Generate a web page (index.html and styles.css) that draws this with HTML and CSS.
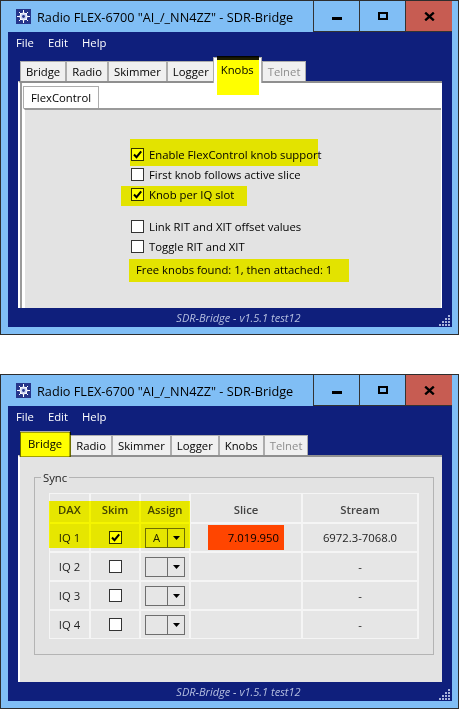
FILE: index.html
```html
<!DOCTYPE html>
<html>
<head>
<meta charset="utf-8">
<title>SDR-Bridge</title>
<link rel="stylesheet" href="styles.css">
</head>
<body>
<div class="window win-knobs">
  <div class="titlebar">
    <svg class="appicon" width="15" height="15" viewBox="0 0 15 15"><rect width="15" height="15" fill="#26358a"/><g stroke="#fff" stroke-width="1"><line x1="7.5" y1="1" x2="7.5" y2="14"/><line x1="1" y1="7.5" x2="14" y2="7.5"/><line x1="3" y1="3" x2="12" y2="12"/><line x1="12" y1="3" x2="3" y2="12"/></g><circle cx="7.5" cy="7.5" r="3.6" fill="#c9d2f2" stroke="#fff"/><circle cx="7.5" cy="7.5" r="1.4" fill="#26358a"/></svg>
    <span class="title">Radio FLEX-6700 "AI_/_NN4ZZ" - SDR-Bridge</span>
    <div class="caption-btns">
      <div class="cbtn"><svg class="ic-min" width="10" height="3"><rect width="10" height="3" fill="#000"/></svg></div>
      <div class="cbtn"><svg width="10" height="8"><rect x="1" y="1" width="8" height="6" fill="none" stroke="#000" stroke-width="2"/></svg></div>
      <div class="cbtn close"><svg width="11" height="9" viewBox="0 0 11 9"><path d="M1.2 0.6 L9.8 8.4 M9.8 0.6 L1.2 8.4" stroke="#000" stroke-width="2.3"/></svg></div>
    </div>
  </div>
  <div class="client">
    <div class="menubar"><span>File</span><span>Edit</span><span>Help</span></div>
    <div class="tabstrip">
      <div class="tab">Bridge</div>
      <div class="tab">Radio</div>
      <div class="tab">Skimmer</div>
      <div class="tab">Logger</div>
      <div class="tab sel">Knobs</div>
      <div class="tab disabled">Telnet</div>
    </div>
    <div class="tabpage knobs-page">
      <div class="subtabstrip"><div class="subtab">FlexControl</div></div>
      <div class="subpage">
        <div class="checklist">
          <div class="cb-row"><span class="cb"><svg width="11" height="11" viewBox="0 0 11 11"><path d="M2 5.5 L4.5 8.2 L9.2 2.4" fill="none" stroke="#000" stroke-width="2"/></svg></span>Enable FlexControl knob support</div>
          <div class="cb-row"><span class="cb"></span>First knob follows active slice</div>
          <div class="cb-row"><span class="cb"><svg width="11" height="11" viewBox="0 0 11 11"><path d="M2 5.5 L4.5 8.2 L9.2 2.4" fill="none" stroke="#000" stroke-width="2"/></svg></span>Knob per IQ slot</div>
          <div class="cb-row gap"><span class="cb"></span>Link RIT and XIT offset values</div>
          <div class="cb-row"><span class="cb"></span>Toggle RIT and XIT</div>
          <div class="info">Free knobs found: 1, then attached: 1</div>
        </div>
      </div>
    </div>
    <div class="statusbar">
      <span class="status-text">SDR-Bridge - v1.5.1 test12</span>
      <svg class="grip" width="11" height="11" viewBox="0 0 11 11" fill="#a9b4dc"><rect x="9" y="0" width="2" height="2"/><rect x="6" y="3" width="2" height="2"/><rect x="9" y="3" width="2" height="2"/><rect x="3" y="6" width="2" height="2"/><rect x="6" y="6" width="2" height="2"/><rect x="9" y="6" width="2" height="2"/><rect x="0" y="9" width="2" height="2"/><rect x="3" y="9" width="2" height="2"/><rect x="6" y="9" width="2" height="2"/><rect x="9" y="9" width="2" height="2"/></svg>
    </div>
  </div>
  <span class="mark mark-knobs-tab"></span>
  <span class="mark mark-enable"></span>
  <span class="mark mark-perslot"></span>
  <span class="mark mark-found"></span>
</div>

<div class="window win-bridge">
  <div class="titlebar">
    <svg class="appicon" width="15" height="15" viewBox="0 0 15 15"><rect width="15" height="15" fill="#26358a"/><g stroke="#fff" stroke-width="1"><line x1="7.5" y1="1" x2="7.5" y2="14"/><line x1="1" y1="7.5" x2="14" y2="7.5"/><line x1="3" y1="3" x2="12" y2="12"/><line x1="12" y1="3" x2="3" y2="12"/></g><circle cx="7.5" cy="7.5" r="3.6" fill="#c9d2f2" stroke="#fff"/><circle cx="7.5" cy="7.5" r="1.4" fill="#26358a"/></svg>
    <span class="title">Radio FLEX-6700 "AI_/_NN4ZZ" - SDR-Bridge</span>
    <div class="caption-btns">
      <div class="cbtn"><svg class="ic-min" width="10" height="3"><rect width="10" height="3" fill="#000"/></svg></div>
      <div class="cbtn"><svg width="10" height="8"><rect x="1" y="1" width="8" height="6" fill="none" stroke="#000" stroke-width="2"/></svg></div>
      <div class="cbtn close"><svg width="11" height="9" viewBox="0 0 11 9"><path d="M1.2 0.6 L9.8 8.4 M9.8 0.6 L1.2 8.4" stroke="#000" stroke-width="2.3"/></svg></div>
    </div>
  </div>
  <div class="client">
    <div class="menubar"><span>File</span><span>Edit</span><span>Help</span></div>
    <div class="tabstrip">
      <div class="tab sel first">Bridge</div>
      <div class="tab">Radio</div>
      <div class="tab">Skimmer</div>
      <div class="tab">Logger</div>
      <div class="tab">Knobs</div>
      <div class="tab disabled">Telnet</div>
    </div>
    <div class="tabpage bridge-page">
      <fieldset class="group">
        <legend>Sync</legend>
        <div class="grid">
          <div class="hd">DAX</div><div class="hd">Skim</div><div class="hd">Assign</div><div class="hd">Slice</div><div class="hd">Stream</div>

          <div>IQ 1</div>
          <div><span class="cb"><svg width="11" height="11" viewBox="0 0 11 11"><path d="M2 5.5 L4.5 8.2 L9.2 2.4" fill="none" stroke="#000" stroke-width="2"/></svg></span></div>
          <div><span class="combo"><span class="combo-val">A</span><span class="combo-arrow"><svg width="7" height="4"><polygon points="0,0 7,0 3.5,4" fill="#000"/></svg></span></span></div>
          <div><span class="slice-val">7.019.950</span></div>
          <div>6972.3-7068.0</div>

          <div>IQ 2</div>
          <div><span class="cb"></span></div>
          <div><span class="combo"><span class="combo-val"></span><span class="combo-arrow"><svg width="7" height="4"><polygon points="0,0 7,0 3.5,4" fill="#000"/></svg></span></span></div>
          <div></div>
          <div>-</div>

          <div>IQ 3</div>
          <div><span class="cb"></span></div>
          <div><span class="combo"><span class="combo-val"></span><span class="combo-arrow"><svg width="7" height="4"><polygon points="0,0 7,0 3.5,4" fill="#000"/></svg></span></span></div>
          <div></div>
          <div>-</div>

          <div>IQ 4</div>
          <div><span class="cb"></span></div>
          <div><span class="combo"><span class="combo-val"></span><span class="combo-arrow"><svg width="7" height="4"><polygon points="0,0 7,0 3.5,4" fill="#000"/></svg></span></span></div>
          <div></div>
          <div>-</div>
        </div>
      </fieldset>
    </div>
    <div class="statusbar">
      <span class="status-text">SDR-Bridge - v1.5.1 test12</span>
      <svg class="grip" width="11" height="11" viewBox="0 0 11 11" fill="#a9b4dc"><rect x="9" y="0" width="2" height="2"/><rect x="6" y="3" width="2" height="2"/><rect x="9" y="3" width="2" height="2"/><rect x="3" y="6" width="2" height="2"/><rect x="6" y="6" width="2" height="2"/><rect x="9" y="6" width="2" height="2"/><rect x="0" y="9" width="2" height="2"/><rect x="3" y="9" width="2" height="2"/><rect x="6" y="9" width="2" height="2"/><rect x="9" y="9" width="2" height="2"/></svg>
    </div>
  </div>
  <span class="mark mark-bridge-tab"></span>
  <span class="mark mark-table"></span>
</div>
</body>
</html>
```

FILE: styles.css
```css
* { box-sizing: border-box; }

body {
  margin: 0;
  background: #fff;
  font-family: "Open Sans", "Noto Sans", sans-serif;
  font-size: 11.3px;
  color: #000;
}

.window {
  position: relative;
  width: 459px;
  height: 335px;
  border: 1px solid #2d2d2d;
  background: #80bef5;
  display: flex;
  flex-direction: column;
}
.window + .window { margin-top: 39px; }

.titlebar {
  height: 31px;
  flex: none;
  display: flex;
  align-items: center;
}
.appicon { margin-left: 15px; flex: none; }
.title {
  margin-left: 6px;
  font-size: 12.7px;
  white-space: nowrap;
}
.caption-btns {
  margin-left: auto;
  margin-right: 6px;
  align-self: stretch;
  display: flex;
  border-bottom: 1px solid #333;
}
.cbtn {
  width: 46px;
  border-left: 1px solid #333;
  display: flex;
  align-items: center;
  justify-content: center;
}
.cbtn .ic-min { margin-top: 4px; }
.cbtn.close { width: 47px; background: #c75c52; }

.client {
  flex: 1;
  margin: 0 6px 7px 7px;
  background: #0f1f7c;
  display: flex;
  flex-direction: column;
  min-height: 0;
}

.menubar {
  height: 20px;
  flex: none;
  display: flex;
  align-items: center;
  padding-left: 1px;
  color: #fff;
}
.menubar span { padding: 0 7px; }

.tabstrip {
  margin-top: 5px;
  height: 24px;
  flex: none;
  display: flex;
  align-items: flex-end;
  padding-left: 12px;
}
.tab {
  height: 20px;
  padding: 0 5px;
  border: 1px solid #adadad;
  border-bottom: none;
  background: #f0f0f0;
  display: flex;
  align-items: center;
  white-space: nowrap;
}
.tab.sel {
  height: 26px;
  margin-bottom: -2px;
  margin-left: -2px;
  padding: 0 7px 2px;
  background: #fff;
  position: relative;
  z-index: 1;
}
.tab.sel.first { margin-left: 0; }
.tab.disabled { color: #8d8d8d; }

.tabpage {
  margin: 0 10px;
  height: 227px;
  flex: none;
  border-top: 2px solid #8f8f8f;
  border-left: 2px solid #fff;
}

.knobs-page {
  background: #fff;
  box-shadow: inset 2px 0 #9a9a9a;
  padding: 3px 1px 0 3px;
  display: flex;
  flex-direction: column;
}
.subtabstrip { display: flex; flex: none; }
.subtab {
  height: 22px;
  padding: 0 7px;
  border: 1px solid #adadad;
  border-bottom: none;
  background: #fff;
  display: flex;
  align-items: center;
}
.subpage {
  flex: 1;
  border-top: 2px solid #9a9a9a;
  border-left: 2px solid #fff;
  background: #e3e3e3;
}

.checklist {
  display: flex;
  flex-direction: column;
  padding: 34px 0 0 106px;
}
.cb-row {
  height: 20px;
  display: flex;
  align-items: center;
  gap: 5px;
  white-space: nowrap;
}
.cb-row.gap { margin-top: 12px; }
.info {
  margin: 4px 0 0 5px;
  height: 20px;
  line-height: 20px;
  white-space: nowrap;
}

.cb {
  width: 13px;
  height: 13px;
  flex: none;
  border: 1px solid #333;
  background: #fff;
  display: flex;
  align-items: center;
  justify-content: center;
}

.statusbar {
  height: 19px;
  flex: none;
  display: grid;
  grid-template-columns: 1fr auto 1fr;
  align-items: center;
  padding-left: 17px;
}
.status-text {
  grid-column: 2;
  font-size: 11px;
  font-style: italic;
  color: #b5bfe0;
  white-space: nowrap;
}
.grip {
  grid-column: 3;
  justify-self: end;
  align-self: end;
  margin: 0 2px 1px 0;
}

/* Bridge page */
.bridge-page {
  background: #e3e3e3;
  padding-top: 13px;
}
.group {
  margin: 0 8px 0 14px;
  padding: 8px 14px 15px;
  border: 1px solid #b4b4b4;
  min-width: 0;
}
.group legend {
  padding: 0 2px;
  margin-left: -8px;
  line-height: 15px;
  color: #222;
}
.grid {
  display: grid;
  grid-template-columns: 39px 48px 48px 110px 114px;
  grid-template-rows: 28px 27px 27px 27px 27px;
  gap: 2px;
  padding: 1px;
  background: #f5f5f5;
}
.grid > div {
  background: #e6e6e6;
  display: flex;
  align-items: center;
  justify-content: center;
  color: #222;
  white-space: nowrap;
}
.grid > .hd {
  font-weight: 600;
  color: #444;
  padding-top: 3px;
}
.slice-val {
  width: 76px;
  height: 25px;
  background: #ff4500;
  display: flex;
  align-items: center;
  justify-content: flex-end;
  padding-right: 5px;
  color: #000;
}
.combo {
  width: 40px;
  height: 20px;
  border: 1px solid #6e6e6e;
  display: flex;
}
.combo-val {
  width: 22px;
  border-right: 1px solid #6e6e6e;
  display: flex;
  align-items: center;
  justify-content: center;
}
.combo-arrow {
  flex: 1;
  display: flex;
  align-items: center;
  justify-content: center;
}

/* annotation highlights laid over the screenshots */
.mark {
  position: absolute;
  background: #ffff00;
  mix-blend-mode: multiply;
  pointer-events: none;
  z-index: 5;
}
.mark-knobs-tab { left: 216px; top: 55px; width: 42px; height: 39px; border-top: 4px solid #1c1c00; }
.mark-enable { left: 129px; top: 138px; width: 188px; height: 27px; }
.mark-perslot { left: 120px; top: 185px; width: 126px; height: 20px; }
.mark-found { left: 128px; top: 258px; width: 220px; height: 23px; }
.mark-bridge-tab { left: 19px; top: 57px; width: 51px; height: 25px; border: 1px solid #a3a300; }
.mark-table { left: 48px; top: 126px; width: 141px; height: 47px; }
```
